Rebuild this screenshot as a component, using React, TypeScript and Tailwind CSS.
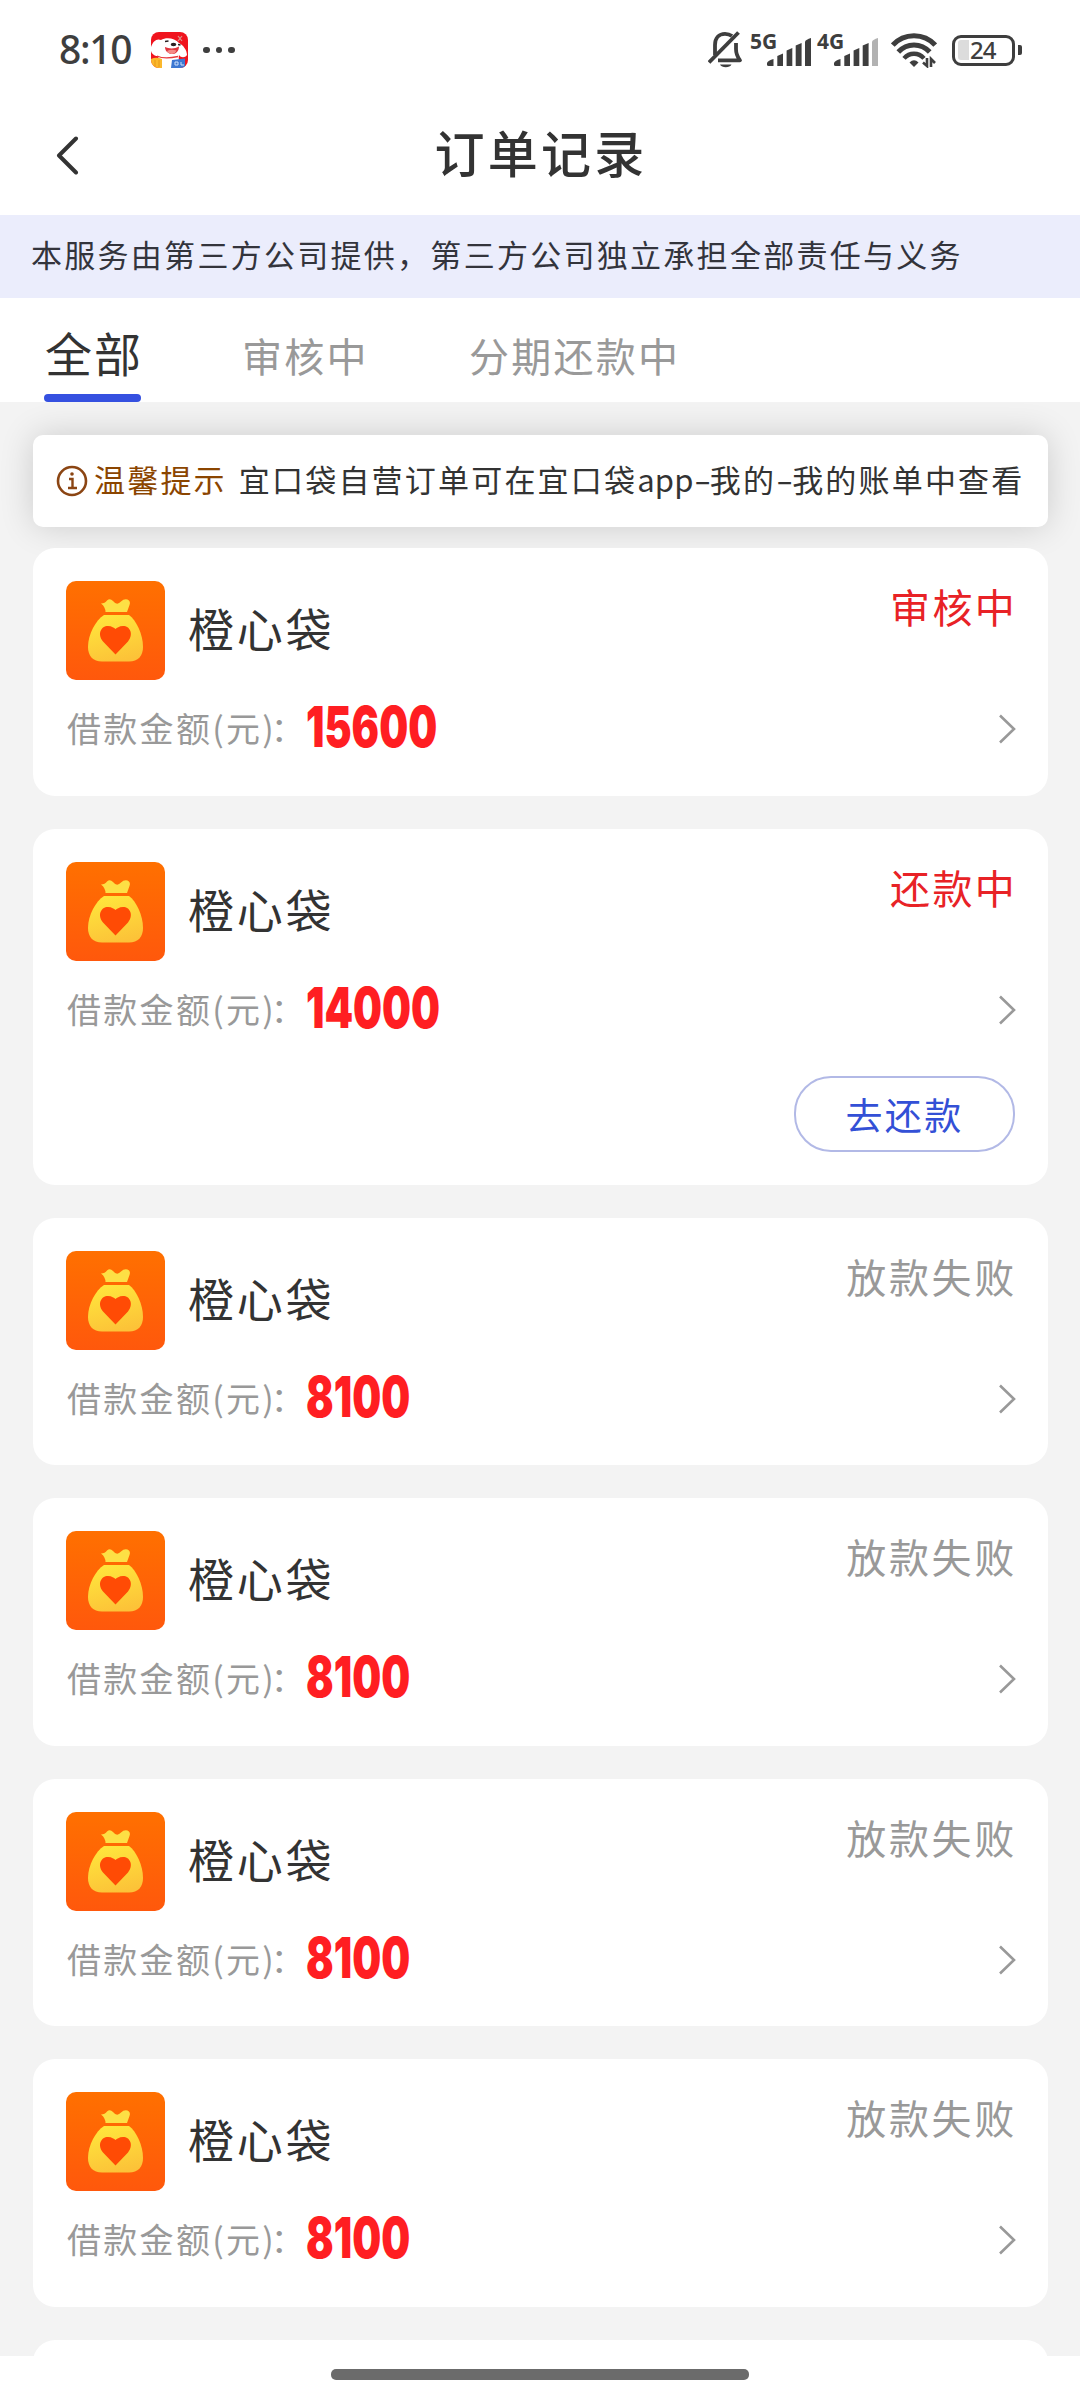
import { clsx } from "clsx";

type Status = "reviewing" | "repaying" | "failed";

interface Order {
    id: number;
    name: string;
    amount: number;
    status: Status;
}

const STATUS_LABEL: Record<Status, string> = {
    reviewing: "审核中",
    repaying: "还款中",
    failed: "放款失败",
};

const ORDERS: Order[] = [
    { id: 1, name: "橙心袋", amount: 15600, status: "reviewing" },
    { id: 2, name: "橙心袋", amount: 14000, status: "repaying" },
    { id: 3, name: "橙心袋", amount: 8100, status: "failed" },
    { id: 4, name: "橙心袋", amount: 8100, status: "failed" },
    { id: 5, name: "橙心袋", amount: 8100, status: "failed" },
    { id: 6, name: "橙心袋", amount: 8100, status: "failed" },
];

function PuppyIcon() {
    return (
        <svg width="37" height="36" viewBox="0 0 37 36" className="ml-[20px] rounded-[8px]">
            <rect width="37" height="36" fill="#f0141e" />
            <path d="M0 15 C2 9 6 6 10 8 C15 5 24 6 28 11 C32 13 36 18 36 23 C34 26 30 26 28 23 C27 27 29 30 28 36 H8 C9 31 8 28 7 24 C2 24 -1 20 0 15Z" fill="#fff" />
            <path d="M14 15 C18 17 24 17 28 14.500 C28 19 25 22.500 20.500 22 C16 21.500 14 18 14 15Z" fill="#e0343c" />
            <path d="M16 19 Q20 17 25.500 18.500 Q24 22 20.500 22 Q17 21.500 16 19Z" fill="#f58a86" />
            <ellipse cx="22.500" cy="12.500" rx="2.800" ry="1.700" fill="#2a2022" />
            <path d="M14 9.500 l3.500 -.5 M27 12.500 l2.500 .5" stroke="#2a2022" strokeWidth="1.300" />
            <path d="M27 4 l4 5 M31 4 l-4 5" stroke="#d99a90" strokeWidth="1.200" />
            <path d="M6 24 C11 26.500 18 26.500 27 24.500" stroke="#e83a3c" strokeWidth="1.300" fill="none" />
            <path d="M0 27 Q5 24.500 11 27 V36 H0Z" fill="#fbb82c" />
            <path d="M4 28 V35 M8 28 V35" stroke="#e89716" />
            <path d="M21 28 L34 26.500 V36 H20Z" fill="#3d78d2" />
            <path d="M24 30 h3 v3 h-3z M30 30 v3 h3" stroke="#cfe0fa" fill="none" />
        </svg>
    );
}

function MutedBellIcon() {
    return (
        <svg width="36" height="40" viewBox="0 0 36 40" fill="none" stroke="#3e3e3e" strokeWidth="3.800">
            <path d="M7 25 V15 C7 8 11 3.800 17 3.800 C20 3.800 22 4.500 24 6" />
            <path d="M28 13 V19 C28 24 29.500 27 32 30.300 H10" strokeLinejoin="round" />
            <path d="M1 32.500 L30.500 2.500" />
            <path d="M12 34.500 H23.500 C22 38 13.500 38 12 34.500Z" fill="#3e3e3e" stroke="none" />
        </svg>
    );
}

interface SignalProps {
    label: string;
    weak?: boolean;
}

function Signal({ label, weak }: SignalProps) {
    return (
        <div className="flex h-[34px] w-[60px] items-end">
            <span className="-ml-px -mr-[10px] w-[27px] self-start whitespace-nowrap font-['Noto_Sans'] text-[21px] font-bold leading-[16px]">{label}</span>
            <svg width="44" height="29" viewBox="0 0 44 29" className="shrink-0" fill="#3e3e3e">
                <path d="M0 25 Q1 22.500 6.500 21 V28 H1.500 Q0 28 0 26.500Z" />
                <path d="M10.300 18 L16 15.500 V28 H10.300Z" />
                <path d="M19.600 12.500 L25.300 10 V28 H19.600Z" />
                <path d="M28.700 7.500 L34.600 5 V28 H28.700Z" />
                <path d="M38 3.500 Q39 1.500 44 0 V28 H38Z" fill={weak ? "#b2b2b2" : "#3e3e3e"} />
            </svg>
        </div>
    );
}

function WifiIcon() {
    return (
        <svg width="46" height="36" viewBox="0 0 46 36" fill="none" stroke="#3e3e3e" strokeWidth="5">
            <path d="M1.800 13 C13 .5 33 .5 44.200 13" />
            <path d="M7.300 20 C16 10.600 30 10.600 38.700 20" />
            <path d="M13 26.400 C18.500 20.200 27.500 20.200 33 26.400" strokeWidth="4.400" />
            <path d="M23 35 L18.500 30.500 Q23 26 27.500 30.500Z" fill="#3e3e3e" stroke="none" />
            <path d="M36 26 V34 L32 30.500 M40 35 V27 L44 31" strokeWidth="2.600" />
        </svg>
    );
}

function StatusBar() {
    return (
        <div className="flex h-[100px] shrink-0 items-center bg-white pl-[59px] pr-[58px] text-[#3e3e3e]">
            <span className="-mt-[3px] w-[72px] whitespace-nowrap font-['Noto_Sans'] text-[39px] font-medium leading-none tracking-[-1.300px]">8:10</span>
            <PuppyIcon />
            <div className="ml-[15px] flex gap-[6px]">
                <i className="size-[6.500px] rounded-full bg-[#3e3e3e]" />
                <i className="size-[6.500px] rounded-full bg-[#3e3e3e]" />
                <i className="size-[6.500px] rounded-full bg-[#3e3e3e]" />
            </div>
            <div className="ml-auto flex items-center">
                <MutedBellIcon />
                <div className="ml-[7px] flex gap-[7px]">
                    <Signal label="5G" />
                    <Signal label="4G" weak />
                </div>
                <div className="ml-[13px]">
                    <WifiIcon />
                </div>
                <div className="ml-[15px] flex h-[31px] w-[63px] items-center rounded-[9px] border-[3.500px] border-[#3e3e3e] pl-[3px]">
                    <i className="h-[20px] w-[11px] rounded-l-[3px] bg-[#dcdcdc]" />
                    <span className="ml-px font-['Noto_Sans'] text-[24px] font-medium leading-none tracking-[-1px]">24</span>
                </div>
                <i className="ml-[3px] h-[10px] w-[4px] rounded-r-[2px] bg-[#3e3e3e]" />
            </div>
        </div>
    );
}

function Header() {
    return (
        <header className="flex h-[115px] shrink-0 items-start bg-white px-[56px] pt-[18px]">
            <svg width="24" height="40" viewBox="0 0 24 40" className="mt-[18px]" fill="none" stroke="#333" strokeWidth="4" strokeLinecap="round" strokeLinejoin="round">
                <path d="M20 2.500 L3 19.500 L20 36.500" />
            </svg>
            <h1 className="mr-[22px] flex-1 text-center text-[50px] font-medium leading-[66px] tracking-[3.200px]">订单记录</h1>
        </header>
    );
}

function Tabs() {
    return (
        <nav className="relative flex h-[104px] shrink-0 bg-white pl-[44px] text-[40px] text-[#999]">
            <div className="flex w-[97px] flex-col justify-between">
                <span className="whitespace-nowrap pl-px pt-[19px] text-[47px] leading-[70px] tracking-[2px] text-[#333]">全部</span>
                <i className="h-[8px] rounded-[4px] bg-[#3550e0]" />
            </div>
            <span className="ml-[101px] pt-[22px] leading-[70px] tracking-[2.300px]">审核中</span>
            <span className="ml-[100px] pt-[22px] leading-[70px] tracking-[2.300px]">分期还款中</span>
        </nav>
    );
}

function Dash() {
    return <span className="inline-block w-[16px] origin-left scale-x-[1.600] tracking-normal">-</span>;
}

function Notice() {
    return (
        <div className="flex h-[92px] shrink-0 items-center whitespace-nowrap rounded-[10px] bg-white pl-[23px] text-[31px] tracking-[2.200px] shadow-[0_0_34px_rgba(0,0,0,0.16)]">
            <svg width="32" height="32" viewBox="0 0 32 32" fill="none" stroke="#8b4513" strokeWidth="2.600">
                <circle cx="16" cy="16" r="14" />
                <path d="M13 14 H16.500 V22.500 M12 23 H21" strokeWidth="2.400" />
                <circle cx="16" cy="9" r="1.800" fill="#8b4513" stroke="none" />
            </svg>
            <span className="-mt-[3px] ml-[6px] text-[#8b4500]">温馨提示</span>
            <span className="-mt-[3px] ml-[12px]">
                宜口袋自营订单可在宜口袋<span className="tracking-[0.200px]">app</span>
                <Dash />我的<Dash />我的账单中查看
            </span>
        </div>
    );
}

function PouchLogo() {
    return (
        <svg width="99" height="99" viewBox="0 0 99 99" className="rounded-[10px]">
            <defs>
                <linearGradient id="pouch-bg" x1="0" y1="0" x2="0" y2="1">
                    <stop offset="0" stopColor="#ff7000" />
                    <stop offset="1" stopColor="#ff580c" />
                </linearGradient>
                <linearGradient id="pouch-body" x1="0.300" y1="0" x2="0.600" y2="1">
                    <stop offset="0" stopColor="#ffe63c" />
                    <stop offset="1" stopColor="#fcc238" />
                </linearGradient>
            </defs>
            <rect width="99" height="99" fill="url(#pouch-bg)" />
            <path d="M35 22.500 Q39 22.500 41 19.500 Q44 17 47 20 Q51 25 55 20.500 Q58 17.500 61.500 18.500 Q65 20 63.500 24 L61 31 H39.500 Q39.500 26 35 22.500Z" fill="#fde045" />
            <path d="M38 34 H63 C70 39 77 53 77 66 C77 75 72 80.500 63 80.500 H36 C27 80.500 22 75 22 66 C22 53 30 39 38 34Z" fill="url(#pouch-body)" />
            <path d="M49.500 73.500 L37 60.500 C31 53 35 45 42 45 C46 45 48 47 49.500 48 C51 47 53 45 57 45 C64 45 68 53 62 60.500Z" fill="#ff4b05" />
        </svg>
    );
}

function OrderCard({ order }: { order: Order }) {
    return (
        <article
            className={clsx(
                "shrink-0 rounded-[22px] bg-white px-[33px] pt-[33px]",
                order.status === "repaying" ? "h-[356px]" : "h-[247.500px]",
            )}
        >
            <div className="flex h-[99px]">
                <PouchLogo />
                <h2 className="ml-[23px] text-[46px] leading-[93px] tracking-[2.700px]">{order.name}</h2>
                <span
                    className={clsx(
                        "-mr-[2px] ml-auto text-[40px] leading-[51px]",
                        order.status === "failed" ? "tracking-[2.700px] text-[#999]" : "tracking-[2.300px] text-[#e82226]",
                    )}
                >
                    {STATUS_LABEL[order.status]}
                </span>
            </div>
            <div className="mt-[21px] flex h-[56px] items-start">
                <span className="ml-px w-[239px] whitespace-nowrap text-[34px] leading-[53px] tracking-[2.300px] text-[#999]">
                    借款金额(元<span className="tracking-[-3px]">)</span>：
                </span>
                <span className="origin-left scale-x-[0.722] font-['Inter'] text-[56.500px] font-black leading-[52px] text-[#ff1e22]">{order.amount}</span>
                <svg width="18" height="30" viewBox="0 0 18 30" className="-mr-px ml-auto mt-[13px]" fill="none" stroke="#999" strokeWidth="2.600">
                    <path d="M2 1.500 L16 15 L2 28.500" />
                </svg>
            </div>
            {order.status === "repaying" && (
                <div className="mt-[38px] flex justify-end">
                    <button className="h-[76px] w-[221px] rounded-[37px] border-2 border-[#b2b9e6] text-[37px] leading-[70px] tracking-[2.300px] text-[#3350d6]">
                        去还款
                    </button>
                </div>
            )}
        </article>
    );
}

export default function App() {
    return (
        <div className="flex h-[2400px] w-[1080px] flex-col overflow-hidden bg-[#f3f3f3] font-['Noto_Sans_CJK_SC',sans-serif] text-[#333]">
            <StatusBar />
            <Header />
            <p className="h-[83px] shrink-0 whitespace-nowrap bg-[#ebedfc] pl-[31px] text-[31px] leading-[77px] tracking-[2.280px] text-[#33343c]">
                本服务由第三方公司提供，第三方公司独立承担全部责任与义务
            </p>
            <Tabs />
            <main className="flex min-h-0 flex-1 flex-col overflow-hidden pl-[33px] pr-[32px] pt-[33px]">
                <Notice />
                <section className="mt-[21px] flex flex-col gap-[33px]">
                    {ORDERS.map((order) => (
                        <OrderCard key={order.id} order={order} />
                    ))}
                    {/* top edge of the next card */}
                    <div className="h-[40px] shrink-0 rounded-t-[22px] bg-white" />
                </section>
            </main>
            {/* gesture bar */}
            <footer className="flex h-[44px] shrink-0 justify-center bg-white pt-[13px]">
                <i className="h-[11px] w-[418px] rounded-[5px] bg-[#6b6b6b]" />
            </footer>
        </div>
    );
}
